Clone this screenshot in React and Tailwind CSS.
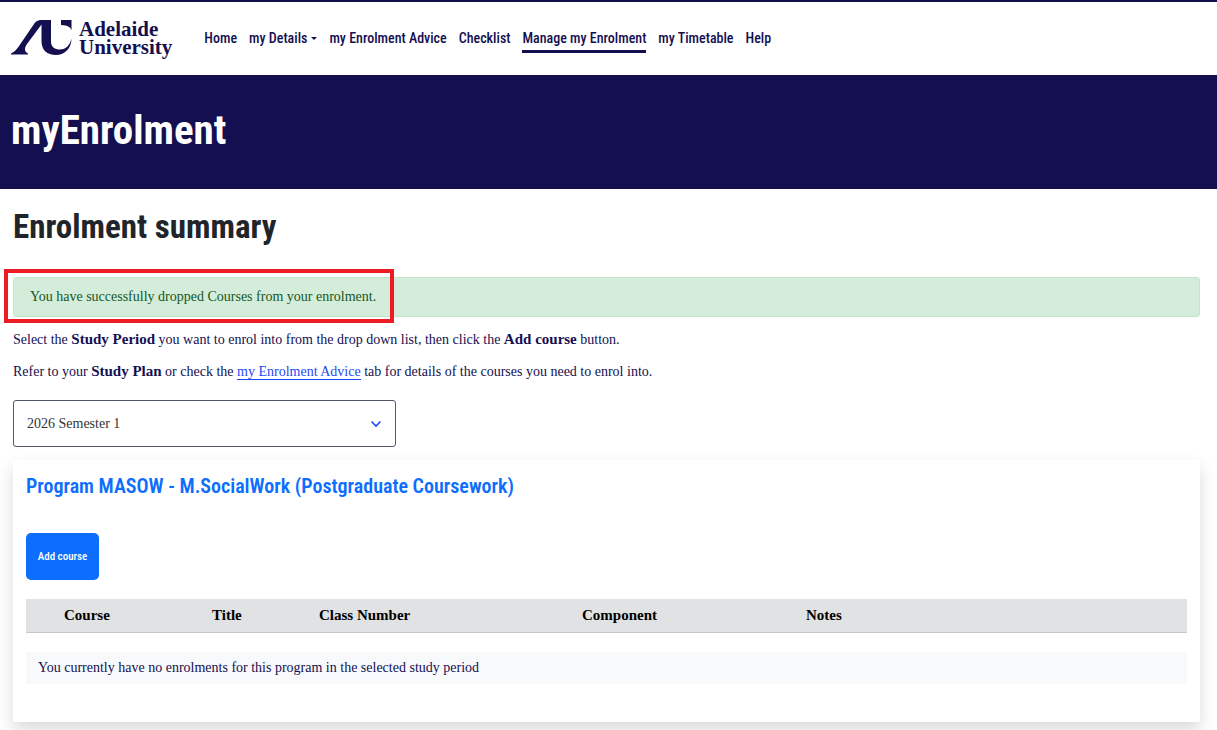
const navItems = [
  { label: "Home" },
  { label: "my Details", dropdown: true },
  { label: "my Enrolment Advice" },
  { label: "Checklist" },
  { label: "Manage my Enrolment", active: true },
  { label: "my Timetable" },
  { label: "Help" },
];

const columns = [
  { label: "Course", width: "w-[148px]" },
  { label: "Title", width: "w-[107px]" },
  { label: "Class Number", width: "w-[263px]" },
  { label: "Component", width: "w-[224px]" },
  { label: "Notes", width: "w-auto" },
];

function Logo() {
  return (
    <a href="#" className="flex items-start gap-[7px] pb-[2px] text-[#140f50]">
      <svg viewBox="0 0 61 35" className="w-[61px] h-[35px]" fill="currentColor" aria-hidden="true">
        <path d="M0 34.500V33.500C3 32 5 30 7 27.500L23 4C25 1 27 0 30 0H40V22C40 27 44 29.500 49 29.500C55 29.500 59 25 60.500 18.500C60.500 28 54 35 45 35C36 35 30.500 30 30.500 21V4.500L16 24C13 28 13.500 32 17 33.500V34.500Z" />
        <path d="M50 0H60.500V10.500C60 7.500 57 5.200 50 5Z" />
      </svg>
      <span className="flex flex-col font-['Liberation_Serif',serif] font-bold text-[21px] leading-[18px]">
        <span>Adelaide</span>
        <span>University</span>
      </span>
    </a>
  );
}

function Navbar() {
  return (
    <header className="border-t-2 border-[#140f50] h-[75px] flex items-center px-[11px] gap-8">
      <Logo />
      <nav className="flex items-center gap-3">
        {navItems.map((item) => (
          <a
            key={item.label}
            href="#"
            className={`flex items-center gap-1 pt-1 pb-[2px] border-b-[3px] text-[14px] leading-5 font-['Roboto_Condensed','Liberation_Sans_Narrow',sans-serif] font-medium text-[#140f50] ${
              item.active ? "border-[#140f50]" : "border-transparent"
            }`}
          >
            {item.label}
            {item.dropdown && (
              <span className="border-x-[3px] border-t-[3px] border-x-transparent border-t-[#140f50]"></span>
            )}
          </a>
        ))}
      </nav>
    </header>
  );
}

function App() {
  return (
    <div className="min-h-screen bg-white text-[#140f50] font-['Liberation_Serif',serif] text-[14px] leading-5">
      <Navbar />

      {/* BANNER */}
      <div className="bg-[#140f50] h-[114px] px-[11px] pb-1 flex items-center">
        <h1 className="text-white font-['Roboto_Condensed','Liberation_Sans_Narrow',sans-serif] font-bold text-[41px] leading-[50px]">
          myEnrolment
        </h1>
      </div>

      <main className="pl-[13px] pr-[17px] pt-[17px] pb-2">
        <h2 className="text-[#212529] font-['Roboto_Condensed','Liberation_Sans_Narrow',sans-serif] font-bold text-[33px] leading-[42px]">
          Enrolment summary
        </h2>

        {/* MESSAGE */}
        <div
          role="alert"
          className="relative mt-[29px] h-10 px-4 flex items-center rounded-[3px] bg-[#d4edda] border border-[#c3e6cb] text-[#155724]"
        >
          You have successfully dropped Courses from your enrolment.
          <div className="absolute -left-[10px] -top-[9px] w-[390px] h-[54px] border-4 border-[#ec1c24]"></div>
        </div>

        <p className="mt-[13px]">
          Select the <strong className="text-[15px] leading-none">Study Period</strong> you want to
          enrol into from the drop down list, then click the{" "}
          <strong className="text-[15px] leading-none">Add course</strong> button.
        </p>
        <p className="mt-3">
          Refer to your <strong className="text-[15px] leading-none">Study Plan</strong> or check
          the{" "}
          <a href="#" className="text-[#1f49f5] border-b border-[#1f49f5]">my Enrolment Advice</a>{" "}
          tab for details of the courses you need to enrol into.
        </p>

        <div className="relative mt-[18px] w-[383px]">
          <select
            aria-label="Study Period"
            className="appearance-none block w-full h-[47px] px-[13px] rounded-[3px] border border-[#4f5864] bg-white text-[#333333]"
          >
            <option>2026 Semester 1</option>
          </select>
          <svg
            viewBox="0 0 12 8"
            className="absolute right-[14px] top-5 w-3 h-2 pointer-events-none"
            fill="none"
            stroke="#1f49f5"
            strokeWidth="1.6"
          >
            <path d="M1.500 1.500L6 6L10.500 1.500" />
          </svg>
        </div>

        {/* PROGRAM */}
        <section className="mt-[13px] px-[13px] pt-3 pb-[38px] bg-white shadow-[0_8px_16px_rgba(0,0,0,0.15)]">
          <h3 className="text-[#0d6efd] font-['Roboto_Condensed','Liberation_Sans_Narrow',sans-serif] font-semibold text-[20px] leading-7">
            Program MASOW - M.SocialWork (Postgraduate Coursework)
          </h3>

          <button className="mt-[33px] w-[73px] h-[47px] block rounded-[5px] bg-[#0d6efd] text-white font-['Roboto_Condensed','Liberation_Sans_Narrow',sans-serif] font-medium text-[11px]">
            Add course
          </button>

          <table className="mt-[19px] w-full table-fixed">
            <thead>
              <tr className="bg-[#e1e2e4] border-b border-[#c6c7c9] text-black text-left text-[15px]">
                {columns.map((col) => (
                  <th key={col.label} className={`h-[33px] pl-[38px] font-bold ${col.width}`}>
                    {col.label}
                  </th>
                ))}
              </tr>
            </thead>
            <tbody>
              <tr>
                <td colSpan={5} className="h-5"></td>
              </tr>
              <tr className="bg-[#f8f9fb]">
                <td colSpan={5} className="h-8 px-3">
                  You currently have no enrolments for this program in the selected study period
                </td>
              </tr>
            </tbody>
          </table>
        </section>
      </main>
    </div>
  );
}

export default App;
